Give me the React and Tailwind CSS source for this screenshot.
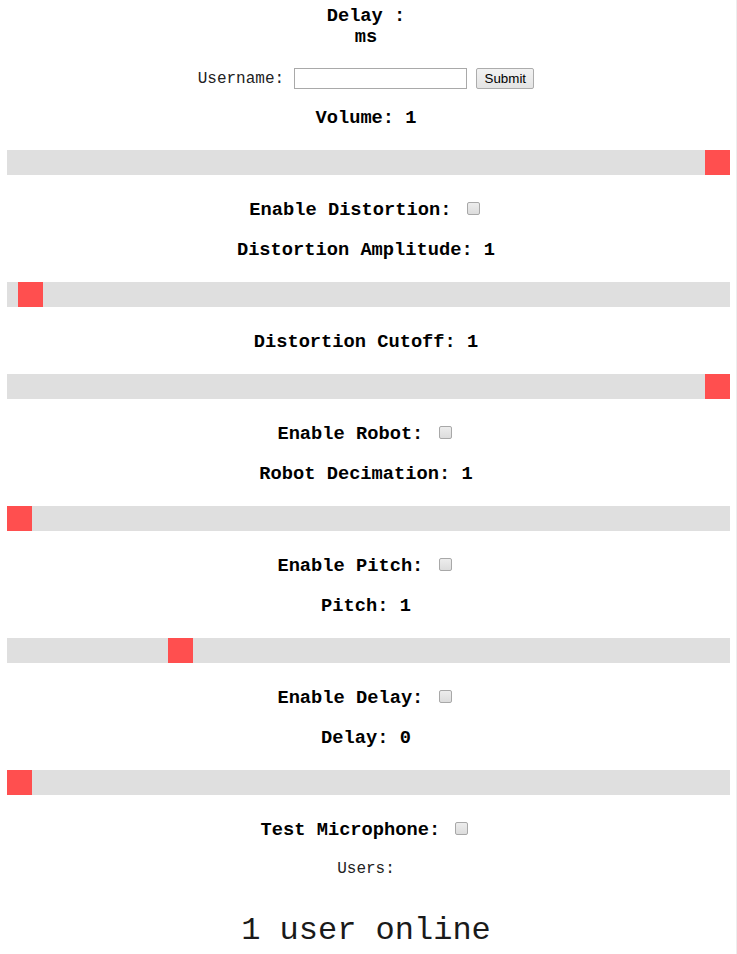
import React from 'react'

const TRACK = 698

function Slider({ pos }) {
  return (
    <div className="relative h-[25px] w-[723px] bg-[#dfdfdf]">
      <div
        className="absolute top-0 h-[25px] w-[25px] bg-[#ff4f4f]"
        style={{ left: `${Math.round(pos * TRACK)}px` }}
      />
    </div>
  )
}

function Label({ children, className }) {
  return (
    <h3 className={'text-center text-[18.72px] font-bold leading-[21px] ' + (className || '')}>
      {children}
    </h3>
  )
}

function Check() {
  return (
    <input
      type="checkbox"
      className="appearance-none inline-block align-middle ml-[4px] mr-[3px] w-[13px] h-[13px] -mt-[3px] border border-[#a8a8a8] rounded-[2px] bg-gradient-to-b from-[#ededed] to-[#dcdcdc]"
    />
  )
}

function Toggle({ label }) {
  return (
    <Label className="mt-[24.5px]">
      {label}:{' '}
      <Check />
    </Label>
  )
}

export default function App() {
  const sections = [
    { enable: null, label: 'Volume: 1', pos: 1 },
    { enable: 'Enable Distortion', label: 'Distortion Amplitude: 1', pos: 11 / TRACK },
    { enable: null, label: 'Distortion Cutoff: 1', pos: 1 },
    { enable: 'Enable Robot', label: 'Robot Decimation: 1', pos: 0 },
    { enable: 'Enable Pitch', label: 'Pitch: 1', pos: 161 / TRACK },
    { enable: 'Enable Delay', label: 'Delay: 0', pos: 0 },
  ]

  return (
    <div className="min-h-screen w-[737px] bg-white border-r border-[#ededed] pl-[7px] pr-[11px] pt-[5.5px] pb-[4px] font-['Liberation_Mono',monospace] text-black">
      <Label>
        Delay :<br />ms
      </Label>

      <div className="mt-[20.5px] flex items-center justify-center h-[21px] text-[16px] text-[#222]">
        <span>Username:&nbsp;</span>
        <input
          type="text"
          className="w-[173px] h-[21px] border border-[#a9a9a9] bg-white outline-none"
        />
        <span>&nbsp;</span>
        <button className="w-[58px] h-[21px] border border-[#acacac] rounded-[2px] bg-gradient-to-b from-[#f2f2f2] to-[#e4e4e4] font-['Liberation_Sans',Arial,sans-serif] text-[13.33px] leading-[19px] text-black">
          Submit
        </button>
      </div>

      {sections.map((s, i) => (
        <div key={i}>
          {s.enable && <Toggle label={s.enable} />}
          <Label className={i === 0 ? 'mt-[18.5px]' : s.enable ? 'mt-[19px]' : 'mt-[24.5px]'}>
            {s.label}
          </Label>
          <div className="mt-[21.5px]">
            <Slider pos={s.pos} />
          </div>
        </div>
      ))}

      <Toggle label="Test Microphone" />

      <p className="mt-[19.5px] text-center text-[16px] leading-[18px] text-[#222]">Users:</p>

      <p className="mt-[35px] text-center text-[32px] leading-[36px] text-[#1a1a1a]">1 user online</p>
    </div>
  )
}
